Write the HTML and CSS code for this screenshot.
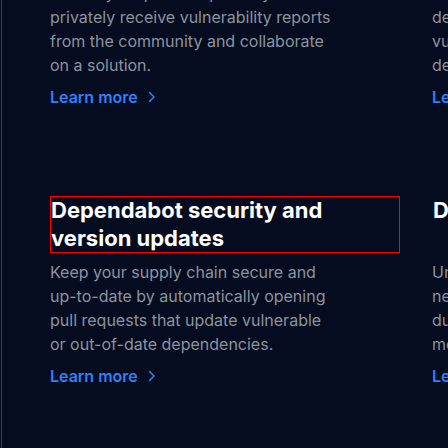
FILE: index.html
```html
<!DOCTYPE html>
<html lang="en">
<head>
<meta charset="utf-8">
<title>Security features</title>
<link rel="stylesheet" href="styles.css">
</head>
<body>
<div class="frame">
  <div class="features">
    <p class="desc">Enable your public repository to privately receive vulnerability reports from the community and collaborate on a solution.</p>
    <p class="desc">Get notified when new<br>developers publish advisories on<br>vulnerabilities that affect your<br>dependencies.</p>
    <a class="more" href="#">Learn more <svg class="chev" width="8" height="12" viewBox="0 0 8 12"><path d="M1.5 1.5 6 6l-4.5 4.5" fill="none" stroke="currentColor" stroke-width="1.5" stroke-linecap="round" stroke-linejoin="round"/></svg></a>
    <a class="more" href="#">Learn more <svg class="chev" width="8" height="12" viewBox="0 0 8 12"><path d="M1.5 1.5 6 6l-4.5 4.5" fill="none" stroke="currentColor" stroke-width="1.5" stroke-linecap="round" stroke-linejoin="round"/></svg></a>

    <h3 class="title title-focus">Dependabot security and version updates</h3>
    <h3 class="title">Dependency review</h3>
    <p class="desc desc-top">Keep your supply chain secure and up-to-date by automatically opening pull requests that update vulnerable or out-of-date dependencies.</p>
    <p class="desc desc-top">Understand the security impact of<br>new dependencies in pull requests<br>during code reviews, before they<br>merge.</p>
    <a class="more" href="#">Learn more <svg class="chev" width="8" height="12" viewBox="0 0 8 12"><path d="M1.5 1.5 6 6l-4.5 4.5" fill="none" stroke="currentColor" stroke-width="1.5" stroke-linecap="round" stroke-linejoin="round"/></svg></a>
    <a class="more" href="#">Learn more <svg class="chev" width="8" height="12" viewBox="0 0 8 12"><path d="M1.5 1.5 6 6l-4.5 4.5" fill="none" stroke="currentColor" stroke-width="1.5" stroke-linecap="round" stroke-linejoin="round"/></svg></a>
  </div>
</div>
</body>
</html>
```
FILE: styles.css
```css
html, body {
  margin: 0;
  padding: 0;
  height: 100%;
  background: #050c20;
  overflow: hidden;
}

.frame {
  margin-left: 1px;
  height: 100%;
  border-left: 1px solid #3a4356;
  overflow: hidden;
}

.features {
  display: grid;
  grid-template-columns: 350px 350px;
  column-gap: 32px;
  margin-top: -19px;
  padding-left: 48px;
  font-family: Inter, "Noto Sans", sans-serif;
}

.desc {
  margin: 0;
  max-width: 290px;
  font-size: 16px;
  line-height: 24px;
  color: #8b949e;
}

.desc-top {
  margin-top: 7px;
}

.more {
  display: inline-flex;
  align-items: center;
  gap: 10px;
  justify-self: start;
  margin-top: 8px;
  font-size: 16px;
  line-height: 24px;
  font-weight: 600;
  color: #2f81f7;
  text-decoration: none;
}

.chev {
  display: block;
}

.title {
  margin: 87px 0 0;
  font-size: 22px;
  line-height: 1.25;
  font-weight: 700;
  color: #ffffff;
  border: 1px solid transparent;
}

.title-focus {
  border-color: #ff0000;
}
```
